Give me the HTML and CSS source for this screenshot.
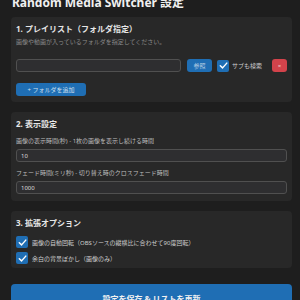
FILE: index.html
```html
<!DOCTYPE html>
<html lang="ja">
<head>
<meta charset="utf-8">
<link rel="stylesheet" href="styles.css">
</head>
<body>
<h1 class="title">Random Media Switcher 設定</h1>

<section class="panel">
  <h2 class="panel-title">1. プレイリスト（フォルダ指定）</h2>
  <p class="desc">画像や動画が入っているフォルダを指定してください。</p>
  <div class="folder-row">
    <input class="text-input folder-input" type="text" value="">
    <button class="btn btn-blue btn-small">参照</button>
    <label class="check">
      <span class="box"><svg viewBox="0 0 12 12"><path d="M2.5 6.3 L5 8.6 L9.6 3.4" fill="none" stroke="#fff" stroke-width="1.6" stroke-linecap="round" stroke-linejoin="round"/></svg></span>
      <span class="check-text">サブも検索</span>
    </label>
    <button class="btn btn-red">×</button>
  </div>
  <button class="btn btn-blue btn-add">+ フォルダを追加</button>
</section>

<section class="panel panel-display">
  <h2 class="panel-title">2. 表示設定</h2>
  <label class="field-label">画像の表示時間(秒) - 1枚の画像を表示し続ける時間</label>
  <input class="text-input full" type="text" value="10">
  <label class="field-label">フェード時間(ミリ秒) - 切り替え時のクロスフェード時間</label>
  <input class="text-input full" type="text" value="1000">
</section>

<section class="panel panel-options">
  <h2 class="panel-title">3. 拡張オプション</h2>
  <label class="check option">
    <span class="box"><svg viewBox="0 0 12 12"><path d="M2.5 6.3 L5 8.6 L9.6 3.4" fill="none" stroke="#fff" stroke-width="1.6" stroke-linecap="round" stroke-linejoin="round"/></svg></span>
    <span class="check-text">画像の自動回転（OBSソースの縦横比に合わせて90度回転）</span>
  </label>
  <label class="check option">
    <span class="box"><svg viewBox="0 0 12 12"><path d="M2.5 6.3 L5 8.6 L9.6 3.4" fill="none" stroke="#fff" stroke-width="1.6" stroke-linecap="round" stroke-linejoin="round"/></svg></span>
    <span class="check-text">余白の背景ぼかし（画像のみ）</span>
  </label>
</section>

<button class="btn btn-blue btn-save">設定を保存 &amp; リストを更新</button>
</body>
</html>
```

FILE: styles.css
```css
* { box-sizing: border-box; }
html, body {
  margin: 0;
  background: #1e1e1e;
}
body {
  padding: 0 8px 0 11px;
  font-family: "Noto Sans", "Noto Sans CJK JP", sans-serif;
  color: #ddd;
  overflow: hidden;
}
.title {
  margin: -4px 0 0 1px;
  font-size: 12px;
  line-height: 14px;
  height: 21px;
  font-weight: 700;
  color: #f0f0f0;
}
.panel {
  background: #282828;
  border-radius: 4px;
  padding: 6px 5px 6px 5px;
  margin-bottom: 10px;
  display: flex;
  flex-direction: column;
}
.panel-display {
  padding-bottom: 7px;
}
.panel-options {
  padding-bottom: 4px;
}
.panel-title {
  margin: 0;
  font-size: 8px;
  line-height: 12px;
  font-weight: 700;
  color: #e6e6e6;
}
.desc {
  margin: 2px 0 0;
  font-size: 6px;
  line-height: 10px;
  color: #8a8a8a;
}
.folder-row {
  display: flex;
  align-items: center;
  margin-top: 12px;
  height: 13px;
}
.text-input {
  height: 13px;
  background: #2e2e30;
  border: 1px solid #505050;
  border-radius: 3px;
  color: #ddd;
  font-family: inherit;
  font-size: 6px;
  padding: 0 4px;
  outline: none;
}
.folder-input {
  width: 165px;
  flex: none;
}
.full {
  width: 100%;
}
.btn {
  border: none;
  font-family: inherit;
  color: #fff;
  padding: 0;
  cursor: pointer;
}
.btn-blue { background: #1f6eb4; }
.btn-small {
  margin-left: 6px;
  width: 25px;
  height: 13px;
  border-radius: 3px;
  font-size: 6px;
  color: #b8cde3;
}
.check {
  display: flex;
  align-items: center;
  margin-left: 5px;
}
.box {
  width: 12px;
  height: 12px;
  background: #1f6eb4;
  border-radius: 2px;
  display: flex;
  align-items: center;
  justify-content: center;
  flex: none;
}
.box svg { width: 11px; height: 11px; display: block; }
.check-text {
  margin-left: 3px;
  font-size: 6px;
  color: #cfcfcf;
}
.btn-red {
  margin-left: auto;
  width: 15px;
  height: 13px;
  border-radius: 3px;
  background: #d3434b;
  font-size: 6px;
  color: #f3d0d0;
}
.btn-add {
  margin-top: 11px;
  width: 70px;
  height: 13px;
  border-radius: 3px;
  font-size: 6px;
  color: #cfe0f0;
}
.field-label {
  margin-top: 6px;
  font-size: 6px;
  line-height: 10px;
  color: #bdbdbd;
}
.field-label + .text-input { margin-top: 3px; }
.option {
  margin-left: 0;
  margin-top: 7px;
}
.option + .option { margin-top: 4px; }
.option .check-text { font-size: 6px; margin-left: 4px; }
.btn-save {
  display: block;
  width: 100%;
  margin-top: 16px;
  height: 30px;
  border-radius: 4px;
  font-size: 8px;
  font-weight: 700;
  color: #f2f2f2;
  text-align: center;
  line-height: 26px;
}
```
